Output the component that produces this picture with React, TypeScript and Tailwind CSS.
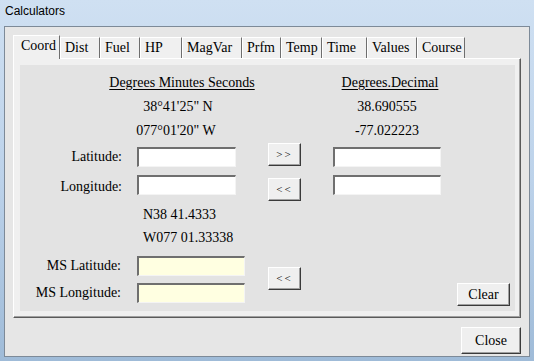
import React from 'react';

const tabs = [
  { label: 'Coord', w: 'w-[47px]' },
  { label: 'Dist', w: 'w-[40px]' },
  { label: 'Fuel', w: 'w-[40px]' },
  { label: 'HP', w: 'w-[42px]' },
  { label: 'MagVar', w: 'w-[60px]' },
  { label: 'Prfm', w: 'w-[39px]' },
  { label: 'Temp', w: 'w-[41px]' },
  { label: 'Time', w: 'w-[45px]' },
  { label: 'Values', w: 'w-[50px]' },
  { label: 'Course', w: 'w-[48px]' },
];

const btn =
  'flex items-center justify-center border border-t-white border-l-white border-b-[#3a3a3a] border-r-[#3a3a3a] bg-[#efefef] shadow-[inset_-1px_-1px_0_#a0a0a0]';

const field =
  'h-[20px] border-t-2 border-l-2 border-b border-r border-t-[#6f6f6f] border-l-[#6f6f6f] border-b-[#f4f4f4] border-r-[#f4f4f4]';

const Arrow = ({ text, className }: { text: string; className: string }) => (
  <div className={`${btn} h-[23px] w-[33px] text-[11px] leading-none tracking-[2px] ${className}`}>{text}</div>
);

export default function App() {
  return (
    <div className="flex h-[361px] w-[534px] flex-col overflow-hidden bg-gradient-to-b from-[#cfe0f2] via-[#bcd2ea] to-[#9fbbd8]">
      {/* TITLE BAR */}
      <div className="h-[26px] pl-[5px] pt-[3px] font-['Liberation_Sans',sans-serif] text-[12px] leading-[16px] text-black">
        Calculators
      </div>

      {/* CLIENT */}
      <div className="ml-[4px] h-[331px] w-[526px] border border-[#7d8a98] bg-[#e6e6e6] font-['Liberation_Serif',serif] text-[14px] text-black">
        <div className="pl-[8px] pt-[8px]">
          {/* TABS */}
          <div className="flex h-[23px] items-start">
            {tabs.map((t, i) =>
              i === 0 ? (
                <div
                  key={t.label}
                  className={`${t.w} relative z-10 h-[24px] border-l border-t border-r border-l-white border-t-white border-r-[#6e6e6e] bg-[#f0f0f0] pl-[7px] pt-[1px] leading-[18px]`}
                >
                  {t.label}
                </div>
              ) : (
                <div
                  key={t.label}
                  className={`${t.w} mt-[2px] h-[21px] border-l border-t border-r border-l-white border-t-white border-r-[#6e6e6e] bg-[#f0f0f0] pl-[4px] pt-[1px] leading-[18px]`}
                >
                  {t.label}
                </div>
              ),
            )}
          </div>

          {/* TAB PANEL */}
          <div className="h-[260px] w-[508px] border-l border-t border-b border-r border-l-white border-t-white border-b-[#5a5a5a] border-r-[#5a5a5a] bg-[#f0f0f0] pl-[6px] pt-[6px] shadow-[inset_-1px_-1px_0_#a0a0a0]">
            <div className="h-[246px] w-[495px] bg-[#e3e3e3] pt-[6px]">
              {/* headings and converted values */}
              <div className="flex">
                <div className="ml-[62px] w-[200px] text-center leading-[24px]">
                  <div className="underline underline-offset-2">Degrees Minutes Seconds</div>
                  <div className="pr-[8px]">38°41'25" N</div>
                  <div className="pr-[12px]">077°01'20" W</div>
                </div>
                <div className="ml-[48px] w-[120px] text-center leading-[24px]">
                  <div className="underline underline-offset-2">Degrees.Decimal</div>
                  <div className="pr-[6px]">38.690555</div>
                  <div className="pr-[6px]">-77.022223</div>
                </div>
              </div>

              {/* latitude row */}
              <div className="flex h-[28px] items-start">
                <div className="mt-[4px] w-[102px] text-right leading-[20px]">Latitude:</div>
                <div className={`${field} ml-[15px] mt-[4px] w-[99px] bg-white`} />
                <Arrow text=">>" className="ml-[32px]" />
                <div className={`${field} ml-[32px] mt-[4px] w-[108px] bg-white`} />
              </div>

              {/* longitude row */}
              <div className="flex h-[28px] items-start">
                <div className="mt-[6px] w-[102px] text-right leading-[20px]">Longitude:</div>
                <div className={`${field} ml-[15px] mt-[4px] w-[99px] bg-white`} />
                <Arrow text="<<" className="ml-[32px] mt-[7px]" />
                <div className={`${field} ml-[32px] mt-[4px] w-[108px] bg-white`} />
              </div>

              {/* degrees decimal minutes */}
              <div className="pl-[123px] pt-[4px] leading-[23px]">
                <div>N38 41.4333</div>
                <div>W077 01.33338</div>
              </div>

              {/* MS section */}
              <div className="flex items-start">
                <div className="flex flex-col">
                  <div className="mt-[7px] flex items-center">
                    <div className="w-[101px] text-right leading-[20px]">MS Latitude:</div>
                    <div className={`${field} ml-[16px] w-[108px] bg-[#ffffe1]`} />
                  </div>
                  <div className="mt-[7px] flex items-center">
                    <div className="w-[101px] text-right leading-[20px]">MS Longitude:</div>
                    <div className={`${field} ml-[16px] w-[108px] bg-[#ffffe1]`} />
                  </div>
                </div>
                <Arrow text="<<" className="ml-[23px] mt-[18px]" />
                <div className={`${btn} ml-[156px] mt-[34px] h-[23px] w-[53px]`}>Clear</div>
              </div>
            </div>
          </div>

          {/* footer */}
          <div className="flex w-[508px] justify-end pt-[9px]">
            <div className={`${btn} h-[27px] w-[60px]`}>Close</div>
          </div>
        </div>
      </div>
    </div>
  );
}
